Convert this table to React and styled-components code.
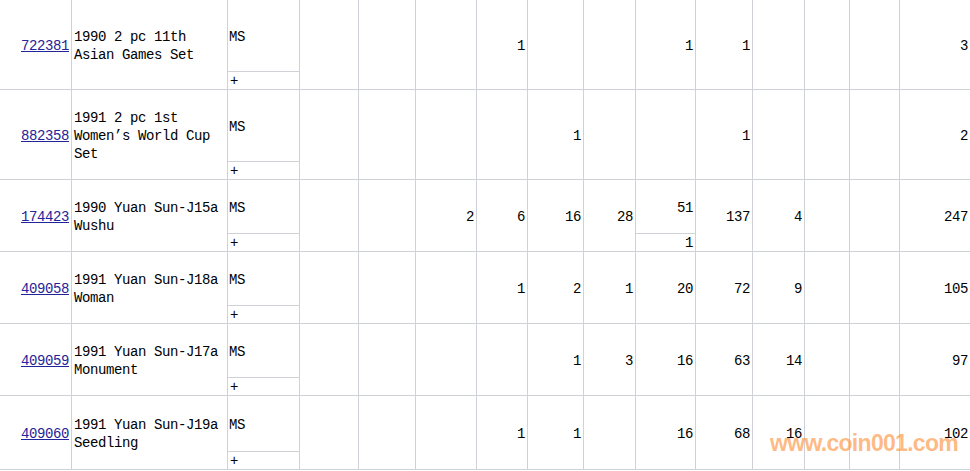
import React from 'react';
import styled, { createGlobalStyle } from 'styled-components';

const GlobalStyle = createGlobalStyle`
  html, body {
    margin: 0;
    padding: 0;
    background: #fff;
  }
  body {
    font-family: "Liberation Mono", "DejaVu Sans Mono", monospace;
    font-size: 14px;
    letter-spacing: -0.4px;
    color: #000;
  }
`;

const LINE = '#cfd3d7';

const Page = styled.div`
  position: relative;
  width: 970px;
  height: 471px;
  overflow: hidden;
`;

const Sheet = styled.div`
  display: flex;
  flex-direction: column;
  width: 970px;
`;

/* columns: id, title, type, 11 counts, total */
const ItemRow = styled.div`
  display: grid;
  grid-template-columns: 72px 156px 72px 59px 57px 61px 51px 56px 52px 60px 57px 52px 45px 50px 70px;
  grid-template-rows: ${(p) => p.$h - 18}px 17px;
  height: ${(p) => p.$h}px;
  box-sizing: border-box;
  border-bottom: 1px solid ${LINE};
  line-height: 18px;
`;

const Cell = styled.div`
  box-sizing: border-box;
  border-right: 1px solid ${LINE};
  display: flex;
  align-items: center;
  min-width: 0;
  padding-top: 2px;
`;

const IdCell = styled(Cell)`
  grid-column: 1;
  grid-row: 1 / span 2;
  justify-content: flex-end;
  padding-right: 2px;
`;

const IdLink = styled.a`
  color: #24249a;
  text-decoration: underline;
`;

const TitleCell = styled(Cell)`
  grid-column: 2;
  grid-row: 1 / span 2;
  padding-left: 2px;
`;

const TypeCell = styled(Cell)`
  grid-column: 3;
  grid-row: 1;
  padding-left: 1px;
  border-bottom: 1px solid ${LINE};
`;

const PlusCell = styled(Cell)`
  grid-column: 3;
  grid-row: 2;
  padding-left: 2px;
  padding-top: 1px;
`;

const NumCell = styled(Cell)`
  grid-column: ${(p) => p.$col};
  grid-row: ${(p) => (p.$part === 'top' ? '1' : p.$part === 'bottom' ? '2' : '1 / span 2')};
  justify-content: flex-end;
  padding-right: 2px;
  padding-top: ${(p) => (p.$part === 'bottom' ? '1px' : '2px')};
  border-bottom: ${(p) => (p.$part === 'top' ? `1px solid ${LINE}` : 'none')};
  border-right: ${(p) => (p.$last ? 'none' : `1px solid ${LINE}`)};
`;

const Watermark = styled.div`
  position: absolute;
  left: 770px;
  top: 432px;
  font-family: "Liberation Sans", Arial, sans-serif;
  font-weight: 700;
  font-size: 23px;
  line-height: 23px;
  letter-spacing: -0.7px;
  color: rgba(252, 140, 50, 0.6);
  pointer-events: none;
  white-space: nowrap;
`;

const items = [
  { id: '722381', title: '1990 2 pc 11th Asian Games Set', h: 90, counts: { 4: 1, 7: 1, 8: 1 }, total: 3 },
  { id: '882358', title: '1991 2 pc 1st Women’s World Cup Set', h: 90, counts: { 5: 1, 8: 1 }, total: 2 },
  {
    id: '174423',
    title: '1990 Yuan Sun-J15a Wushu',
    h: 72,
    counts: { 3: 2, 4: 6, 5: 16, 6: 28, 8: 137, 9: 4 },
    split: { 7: [51, 1] },
    total: 247,
  },
  { id: '409058', title: '1991 Yuan Sun-J18a Woman', h: 72, counts: { 4: 1, 5: 2, 6: 1, 7: 20, 8: 72, 9: 9 }, total: 105 },
  { id: '409059', title: '1991 Yuan Sun-J17a Monument', h: 72, counts: { 5: 1, 6: 3, 7: 16, 8: 63, 9: 14 }, total: 97 },
  { id: '409060', title: '1991 Yuan Sun-J19a Seedling', h: 74, counts: { 4: 1, 5: 1, 7: 16, 8: 68, 9: 16 }, total: 102 },
];

const countCols = Array.from({ length: 11 }, (_, i) => i + 1);

function Item({ item }) {
  return (
    <ItemRow $h={item.h}>
      <IdCell>
        <IdLink href="#">{item.id}</IdLink>
      </IdCell>
      <TitleCell>{item.title}</TitleCell>
      <TypeCell>MS</TypeCell>
      <PlusCell>+</PlusCell>
      {countCols.map((c) => {
        const split = item.split && item.split[c];
        if (split) {
          return (
            <React.Fragment key={c}>
              <NumCell $col={c + 3} $part="top">{split[0]}</NumCell>
              <NumCell $col={c + 3} $part="bottom">{split[1]}</NumCell>
            </React.Fragment>
          );
        }
        return (
          <NumCell key={c} $col={c + 3}>
            {item.counts[c] ?? ''}
          </NumCell>
        );
      })}
      <NumCell $col={15} $last>
        {item.total}
      </NumCell>
    </ItemRow>
  );
}

export default function App() {
  return (
    <Page>
      <GlobalStyle />
      <Sheet>
        {items.map((item) => (
          <Item key={item.id} item={item} />
        ))}
      </Sheet>
      <Watermark>www.coin001.com</Watermark>
    </Page>
  );
}
